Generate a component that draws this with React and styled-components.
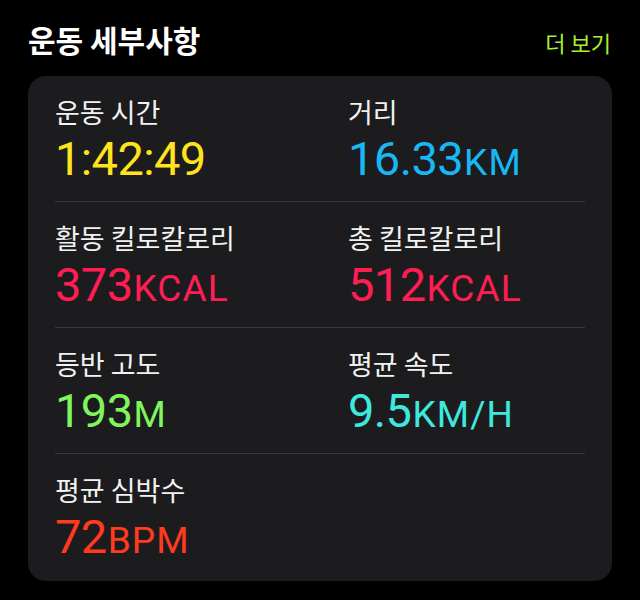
import React from "react";
import styled, { createGlobalStyle } from "styled-components";

const Global = createGlobalStyle`
  html, body { margin: 0; padding: 0; background: #000; }
  body { width: 640px; height: 600px; overflow: hidden; }
`;

const Page = styled.div`
  box-sizing: border-box;
  width: 640px;
  height: 600px;
  padding: 0 28px;
  background: #000;
  font-family: "Noto Sans CJK KR", "Noto Sans", sans-serif;
`;

const Header = styled.header`
  box-sizing: border-box;
  height: 76px;
  padding-top: 20px;
  display: flex;
  align-items: baseline;
  justify-content: space-between;
`;

const Title = styled.h1`
  margin: 0;
  font-size: 30px;
  line-height: 38px;
  font-weight: 700;
  color: #fff;
`;

const More = styled.a`
  font-size: 22px;
  line-height: 28px;
  color: #a6f02c;
  margin-right: 1px;
`;

const Card = styled.section`
  background: #1c1c1e;
  border-radius: 18px;
  padding: 0 27px;
`;

const Row = styled.div`
  display: grid;
  grid-template-columns: 293px 1fr;
  padding: 21px 0 ${(p) => (p.$last ? "20px" : "18px")};
  border-bottom: ${(p) => (p.$last ? "none" : "1px solid #38383a")};
`;

const Metric = styled.div`
  display: flex;
  flex-direction: column;
  gap: 8px;
`;

const Label = styled.div`
  font-size: 27px;
  line-height: 30px;
  color: #f2f2f2;
  white-space: nowrap;
`;

const Value = styled.div`
  font-family: Roboto, "Liberation Sans", sans-serif;
  font-size: 47px;
  line-height: 48px;
  height: 48px;
  letter-spacing: -0.6px;
  color: ${(p) => p.$color};
  white-space: nowrap;
`;

const Unit = styled.span`
  font-size: 37px;
  line-height: 36px;
  letter-spacing: 1.1px;
  margin-left: 1px;
`;

const rows = [
  [
    { label: "운동 시간", value: "1:42:49", color: "#ffe31c" },
    { label: "거리", value: "16.33", unit: "KM", color: "#18b7f5" },
  ],
  [
    { label: "활동 킬로칼로리", value: "373", unit: "KCAL", color: "#ff1d54" },
    { label: "총 킬로칼로리", value: "512", unit: "KCAL", color: "#ff1d54" },
  ],
  [
    { label: "등반 고도", value: "193", unit: "M", color: "#80f55c" },
    { label: "평균 속도", value: "9.5", unit: "KM/H", color: "#3ee8de" },
  ],
  [{ label: "평균 심박수", value: "72", unit: "BPM", color: "#ff3a1e" }],
];

export default function App() {
  return (
    <Page>
      <Global />
      <Header>
        <Title>운동 세부사항</Title>
        <More>더 보기</More>
      </Header>
      <Card>
        {rows.map((r, i) => (
          <Row key={i} $last={i === rows.length - 1}>
            {r.map((m) => (
              <Metric key={m.label}>
                <Label>{m.label}</Label>
                <Value $color={m.color}>
                  {m.value}
                  {m.unit && <Unit>{m.unit}</Unit>}
                </Value>
              </Metric>
            ))}
          </Row>
        ))}
      </Card>
    </Page>
  );
}
